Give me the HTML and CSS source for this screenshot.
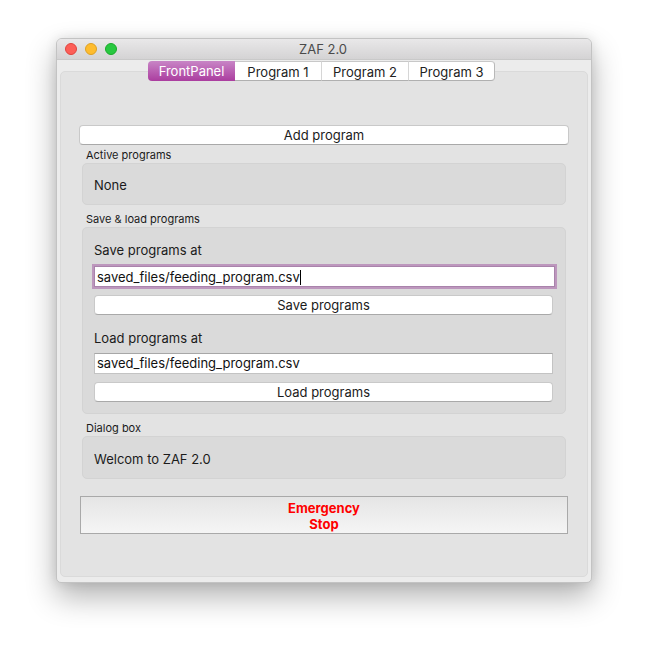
FILE: index.html
```html
<!DOCTYPE html>
<html>
<head>
<meta charset="utf-8">
<title>ZAF 2.0</title>
<link rel="stylesheet" href="styles.css">
</head>
<body>
<div class="window">
  <div class="titlebar">
    <div class="lights">
      <span class="light red"></span>
      <span class="light yellow"></span>
      <span class="light green"></span>
    </div>
    <div class="title">ZAF 2.0</div>
  </div>
  <div class="content">
    <div class="tabs">
      <div class="tab active">FrontPanel</div>
      <div class="tab">Program 1</div>
      <div class="tab">Program 2</div>
      <div class="tab last">Program 3</div>
    </div>
    <div class="pane">
      <div class="btn add">Add program</div>
      <div class="section first">Active programs</div>
      <div class="group simple">None</div>
      <div class="section">Save &amp; load programs</div>
      <div class="group io">
        <div class="label">Save programs at</div>
        <div class="field focused">saved_files/feeding_program.csv<span class="caret"></span></div>
        <div class="btn inner">Save programs</div>
        <div class="label second">Load programs at</div>
        <div class="field plain">saved_files/feeding_program.csv</div>
        <div class="btn inner">Load programs</div>
      </div>
      <div class="section">Dialog box</div>
      <div class="group simple dialog">Welcom to ZAF 2.0</div>
      <div class="emergency">Emergency<br>Stop</div>
    </div>
  </div>
</div>
</body>
</html>
```

FILE: styles.css
```css
* { box-sizing: border-box; }
html, body { margin: 0; }
body {
  background: #ffffff;
  padding: 38px 0 0 56px;
  font-family: Inter, "Liberation Sans", sans-serif;
  color: #1b1b1b;
  width: 648px;
  height: 656px;
  overflow: hidden;
}
.window {
  width: 536px;
  height: 545px;
  border: 1px solid #c3c3c3;
  border-radius: 6px 6px 5px 5px;
  background: #ececec;
  display: flex;
  flex-direction: column;
  box-shadow: 0 14px 30px rgba(0,0,0,0.30), 0 0 12px rgba(0,0,0,0.10);
}
.titlebar {
  height: 21px;
  flex: none;
  border-bottom: 1px solid #c9c9c9;
  border-radius: 5px 5px 0 0;
  background: linear-gradient(#e9e8e9, #d4d3d4);
  display: flex;
  align-items: center;
  position: relative;
}
.lights {
  display: flex;
  gap: 8px;
  padding-left: 8px;
}
.light {
  width: 12px;
  height: 12px;
  border-radius: 50%;
  display: block;
}
.red { background: #fd5e57; border: 0.5px solid #e0443e; }
.yellow { background: #febc2e; border: 0.5px solid #dea123; }
.green { background: #28c840; border: 0.5px solid #1aab29; }
.title {
  flex: 1;
  text-align: center;
  font-size: 13px;
  color: #4a4a4a;
  padding-right: 62px;
  line-height: 20px;
}
.content {
  flex: 1;
  display: flex;
  flex-direction: column;
  padding: 1px 3px 5px 3px;
}
.tabs {
  display: flex;
  justify-content: center;
  padding-right: 5px;
  margin-bottom: -10px;
  position: relative;
  z-index: 1;
  height: 20px;
}
.tab {
  height: 20px;
  width: 87px;
  background: #ffffff;
  border-top: 1px solid #c8c8c8;
  border-bottom: 1px solid #b0b0b0;
  border-right: 1px solid #d6d6d6;
  font-size: 13px;
  line-height: 18px;
  padding-top: 1px;
  text-align: center;
  color: #222;
}
.tab.active {
  background: linear-gradient(#c885c6, #ab3d9f);
  color: #ffffff;
  border: none;
  border-radius: 4px 0 0 4px;
  line-height: 19px;
}
.tab.last {
  width: 86px;
  border-right: 1px solid #b8b8b8;
  border-radius: 0 4px 4px 0;
}
.pane {
  flex: 1;
  background: #e3e3e3;
  border: 1px solid #dadada;
  border-radius: 5px;
  padding: 53px 18px 0 18px;
}
.btn {
  height: 20px;
  background: #ffffff;
  border: 1px solid #c9c9c9;
  border-bottom-color: #a9a9a9;
  border-radius: 4px;
  font-size: 13px;
  line-height: 17px;
  padding-top: 1px;
  text-align: center;
  color: #1b1b1b;
}
.section {
  font-size: 11px;
  line-height: 15px;
  padding: 3px 0 0 7px;
  color: #1b1b1b;
}
.group {
  margin: 0 3px 4px 3px;
  background: #dadada;
  border: 1px solid #d3d3d3;
  border-radius: 5px;
  font-size: 13px;
}
.group.simple {
  height: 42px;
  display: flex;
  align-items: center;
  padding: 1px 12px 0 11px;
}
.group.dialog { height: 43px; margin-bottom: 17px; padding-top: 3px; }
.group.io {
  padding: 14px 12px 11px 11px;
}
.label {
  line-height: 16px;
  height: 16px;
}
.label.second { margin-top: 15px; }
.field {
  height: 21px;
  background: #fff;
  border: 1px solid #c3c3c3;
  border-top-color: #a7a7a7;
  font-size: 13px;
  line-height: 19px;
  padding-left: 2px;
  margin-top: 8px;
  color: #111;
}
.field.focused {
  border-color: #a983ab;
  box-shadow: 0 0 0 2px #bd97bd;
  margin-right: -2px;
  line-height: 20px;
}
.field.plain { margin-top: 7px; }
.caret {
  display: inline-block;
  width: 1px;
  height: 15px;
  background: #000;
  vertical-align: -3px;
}
.btn.inner { margin-top: 8px; }
.emergency {
  height: 38px;
  margin: 0 1px;
  border: 1px solid #a9a9a9;
  background: linear-gradient(#e5e5e5, #f5f5f5);
  color: #ff0000;
  font-weight: 700;
  font-size: 13px;
  line-height: 16px;
  text-align: center;
  padding-top: 3px;
}
```
